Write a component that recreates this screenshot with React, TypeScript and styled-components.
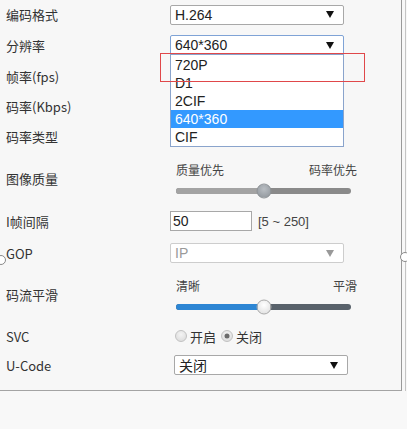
import React from 'react';
import styled, {createGlobalStyle, css} from 'styled-components';

const GlobalStyle = createGlobalStyle`
  html, body {
    margin: 0;
    padding: 0;
    background: #f8f8f8;
  }
  body {
    font-family: "Noto Sans CJK SC", "Liberation Sans", sans-serif;
    color: #333;
  }
`;

const LATIN = `"Liberation Sans", "Noto Sans CJK SC", sans-serif`;

interface RowDef {
  label: string;
  height: number;
  control?: React.ReactNode;
}

const Arrow: React.FC<{muted?: boolean}> = ({muted}) => (
  <svg width="8" height="7" viewBox="0 0 8 7">
    <path d="M0 0 L8 0 L4 7 Z" fill={muted ? '#999' : '#111'} />
  </svg>
);

const Select: React.FC<{value: string; focused?: boolean; disabled?: boolean; offset?: number}> = ({
  value,
  focused,
  disabled,
  offset,
}) => (
  <SelectBox $focused={focused} $disabled={disabled} $offset={offset}>
    <span>{value}</span>
    <Arrow muted={disabled} />
  </SelectBox>
);

const Slider: React.FC<{left: string; right: string; percent: number; blue?: boolean}> = ({
  left,
  right,
  percent,
  blue,
}) => (
  <SliderBlock>
    <SliderLabels>
      <span>{left}</span>
      <span>{right}</span>
    </SliderLabels>
    <Track $blue={blue}>
      <Fill $blue={blue} style={{width: `${percent}%`}} />
      <Thumb $blue={blue} style={{left: `${percent}%`}} />
    </Track>
  </SliderBlock>
);

const options = ['720P', 'D1', '2CIF', '640*360', 'CIF'];

export default function App() {
  const rows: RowDef[] = [
    {label: '编码格式', height: 29, control: <Select value="H.264" />},
    {
      label: '分辨率',
      height: 32,
      control: (
        <DropWrap>
          <Select value="640*360" focused />
          <DropList>
            {options.map((o) => (
              <Option key={o} $active={o === '640*360'}>
                {o}
              </Option>
            ))}
          </DropList>
        </DropWrap>
      ),
    },
    {label: '帧率(fps)', height: 30},
    {label: '码率(Kbps)', height: 30},
    {label: '码率类型', height: 30},
    {label: '图像质量', height: 54, control: <Slider left="质量优先" right="码率优先" percent={50} />},
    {
      label: 'I帧间隔',
      height: 32,
      control: (
        <InputLine>
          <TextInput>50</TextInput>
          <Hint>[5 ~ 250]</Hint>
        </InputLine>
      ),
    },
    {label: 'GOP', height: 32, control: <Select value="IP" disabled />},
    {label: '码流平滑', height: 50, control: <Slider left="清晰" right="平滑" percent={50} blue />},
    {
      label: 'SVC',
      height: 34,
      control: (
        <Radios>
          <Radio />
          <span>开启</span>
          <Radio $checked />
          <span>关闭</span>
        </Radios>
      ),
    },
    {label: 'U-Code', height: 24, control: <Select value="关闭" offset={4} />},
  ];

  return (
    <>
      <GlobalStyle />
      <Frame>
        <Panel>
          {rows.map((r) => (
            <Row key={r.label} $h={r.height}>
              <Label>{r.label}</Label>
              <Control>{r.control}</Control>
            </Row>
          ))}
          <RedMark />
          <Handle $side="left" />
          <Handle $side="right" />
        </Panel>
      </Frame>
    </>
  );
}

const Frame = styled.div`
  width: 406px;
  height: 391px;
  border-right: 1px solid #c4c4c4;
  box-sizing: border-box;
`;

const Panel = styled.div`
  position: relative;
  width: 402px;
  height: 391px;
  box-sizing: border-box;
  border-right: 1px solid #9a9a9a;
  border-bottom: 1px solid #a4a4a4;
  background: #f7f7f7;
`;

const Row = styled.div<{$h: number}>`
  display: flex;
  align-items: center;
  height: ${(p) => p.$h}px;
`;

const Label = styled.div`
  width: 170px;
  flex: none;
  box-sizing: border-box;
  padding-left: 6px;
  font-size: 13px;
  color: #333;
`;

const Control = styled.div`
  flex: 1;
  display: flex;
  align-items: center;
`;

const SelectBox = styled.div<{$focused?: boolean; $disabled?: boolean; $offset?: number}>`
  width: 174px;
  height: 20px;
  box-sizing: border-box;
  margin-left: ${(p) => p.$offset ?? 0}px;
  display: flex;
  align-items: center;
  justify-content: space-between;
  padding: 0 9px 0 4px;
  background: #fff;
  border: 1px solid #a8a8a8;
  border-radius: 2px;
  font-family: ${LATIN};
  font-size: 14px;
  color: #222;
  ${(p) =>
    p.$focused &&
    css`
      border-color: #7fa3d6;
    `}
  ${(p) =>
    p.$disabled &&
    css`
      border-color: #cdcdcd;
      color: #9a9a9a;
    `}
`;

const DropWrap = styled.div`
  position: relative;
`;

const DropList = styled.div`
  position: absolute;
  top: 19px;
  left: 0;
  width: 174px;
  box-sizing: border-box;
  border: 1px solid #8aa4cc;
  background: #fff;
  padding-top: 1px;
  z-index: 5;
`;

const Option = styled.div<{$active?: boolean}>`
  height: 18px;
  line-height: 18px;
  padding-left: 4px;
  font-family: ${LATIN};
  font-size: 14px;
  color: ${(p) => (p.$active ? '#fff' : '#222')};
  background: ${(p) => (p.$active ? '#3399ff' : 'transparent')};
`;

const SliderBlock = styled.div`
  width: 181px;
  margin-left: 6px;
  display: flex;
  flex-direction: column;
  gap: 10px;
`;

const SliderLabels = styled.div`
  display: flex;
  justify-content: space-between;
  font-size: 12px;
  color: #444;
  line-height: 16px;
`;

const Track = styled.div<{$blue?: boolean}>`
  position: relative;
  width: 175px;
  height: 6px;
  border-radius: 3px;
  background: ${(p) => (p.$blue ? '#59626b' : '#8a8a8a')};
`;

const Fill = styled.div<{$blue?: boolean}>`
  height: 100%;
  border-radius: 3px 0 0 3px;
  background: ${(p) => (p.$blue ? '#2d86d4' : '#a3a3a3')};
`;

const Thumb = styled.div<{$blue?: boolean}>`
  position: absolute;
  top: 50%;
  width: 15px;
  height: 15px;
  border-radius: 50%;
  transform: translate(-50%, -50%);
  box-sizing: border-box;
  ${(p) =>
    p.$blue
      ? css`
          background: radial-gradient(circle at 50% 35%, #ffffff, #dcdcdc);
          border: 1px solid #a9a9a9;
        `
      : css`
          background: radial-gradient(circle at 50% 35%, #b9bec3, #8c9298);
          border: 1px solid #8d9296;
        `}
`;

const InputLine = styled.div`
  display: flex;
  align-items: center;
  gap: 6px;
`;

const TextInput = styled.div`
  width: 82px;
  height: 20px;
  box-sizing: border-box;
  border: 1px solid #a8a8a8;
  background: #fff;
  padding-left: 2px;
  font-family: ${LATIN};
  font-size: 14px;
  line-height: 18px;
  color: #222;
`;

const Hint = styled.span`
  font-family: ${LATIN};
  font-size: 13px;
  color: #444;
`;

const Radios = styled.div`
  display: flex;
  align-items: center;
  gap: 3px;
  margin-left: 5px;
  font-size: 13px;
  color: #333;

  span + div {
    margin-left: 2px;
  }
`;

const Radio = styled.div<{$checked?: boolean}>`
  position: relative;
  width: 12px;
  height: 12px;
  border-radius: 50%;
  box-sizing: border-box;
  border: 1px solid #c2c2c2;
  background: radial-gradient(circle at 50% 35%, #f4f4f4, #d8d8d8);

  ${(p) =>
    p.$checked &&
    css`
      &::after {
        content: '';
        position: absolute;
        left: 50%;
        top: 50%;
        width: 5px;
        height: 5px;
        border-radius: 50%;
        transform: translate(-50%, -50%);
        background: #6b6b6b;
      }
    `}
`;

const RedMark = styled.div`
  position: absolute;
  left: 160px;
  top: 53px;
  width: 205px;
  height: 29px;
  box-sizing: border-box;
  border: 1px solid #e0484a;
  z-index: 6;
  pointer-events: none;
`;

const Handle = styled.div<{$side: 'left' | 'right'}>`
  position: absolute;
  width: 10px;
  height: 10px;
  border-radius: 50%;
  box-sizing: border-box;
  border: 1px solid #8a8a8a;
  background: #fff;
  ${(p) =>
    p.$side === 'left'
      ? css`
          left: -4px;
          top: 255px;
        `
      : css`
          right: -9px;
          top: 252px;
        `}
`;
